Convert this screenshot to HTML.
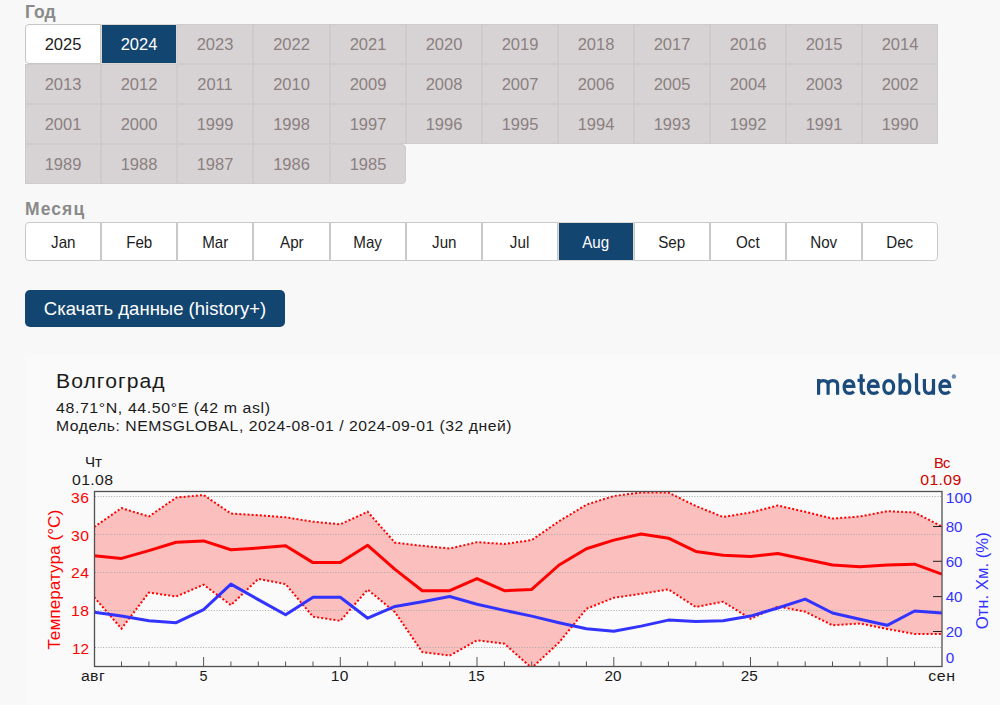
<!DOCTYPE html>
<html><head><meta charset="utf-8">
<style>
html,body{margin:0;padding:0;background:#f8f8f8;width:1000px;height:705px;overflow:hidden;position:relative;font-family:"Liberation Sans",sans-serif;}
.lbl{position:absolute;left:25px;font-weight:bold;font-size:17.5px;color:#8a8a8a;line-height:20px;}
.yc,.mc{position:absolute;width:76.1667px;height:40px;box-sizing:border-box;text-align:center;font-size:16.5px;line-height:40px;}
.yc{line-height:38px;background:#d7d3d4;color:#8b7f80;border:1px solid #cdcbcb;}
.yc.w{background:#fff;color:#1c1c22;border-color:#c6c6c6;border-radius:4px 0 0 4px;}
.yc.sel{background:#134571;color:#fff;border-color:#dcd8d4;}
.yc.last{border-radius:0 4px 4px 0;}
.mc{top:222px;height:39px;background:#fff;color:#1c1c22;border:1px solid #c9c9c9;line-height:39px;}
.mc span{display:inline-block;transform:scaleX(0.92);}
.mc.first{border-radius:4px 0 0 4px;}
.mc.lastm{border-radius:0 4px 4px 0;}
.mc.sel{background:#134571;color:#fff;border-color:#dcd8d4;}
.btn{position:absolute;left:25px;top:290px;width:260px;height:37px;background:#134571;border-radius:5px;color:#fff;font-size:18.5px;line-height:37px;text-align:center;}
.panel{position:absolute;left:25px;top:355px;width:975px;height:350px;background:#fafafa;}
svg{position:absolute;left:0;top:0;}
.gl{stroke:#a8a8a8;stroke-width:1;stroke-dasharray:1 1.7;}
.tk{stroke:#555;stroke-width:1;}
.tk2{stroke:#222;stroke-width:1;}
</style></head><body>
<div class="lbl" style="top:2px">Год</div>
<div class="yc w" style="left:25px;width:76px;top:24px">2025</div>
<div class="yc sel" style="left:101px;width:76px;top:24px">2024</div>
<div class="yc" style="left:177px;width:76px;top:24px">2023</div>
<div class="yc" style="left:253px;width:77px;top:24px">2022</div>
<div class="yc" style="left:330px;width:76px;top:24px">2021</div>
<div class="yc" style="left:406px;width:76px;top:24px">2020</div>
<div class="yc" style="left:482px;width:76px;top:24px">2019</div>
<div class="yc" style="left:558px;width:76px;top:24px">2018</div>
<div class="yc" style="left:634px;width:76px;top:24px">2017</div>
<div class="yc" style="left:710px;width:76px;top:24px">2016</div>
<div class="yc" style="left:786px;width:76px;top:24px">2015</div>
<div class="yc" style="left:862px;width:76px;top:24px">2014</div>
<div class="yc" style="left:25px;width:76px;top:64px">2013</div>
<div class="yc" style="left:101px;width:76px;top:64px">2012</div>
<div class="yc" style="left:177px;width:76px;top:64px">2011</div>
<div class="yc" style="left:253px;width:77px;top:64px">2010</div>
<div class="yc" style="left:330px;width:76px;top:64px">2009</div>
<div class="yc" style="left:406px;width:76px;top:64px">2008</div>
<div class="yc" style="left:482px;width:76px;top:64px">2007</div>
<div class="yc" style="left:558px;width:76px;top:64px">2006</div>
<div class="yc" style="left:634px;width:76px;top:64px">2005</div>
<div class="yc" style="left:710px;width:76px;top:64px">2004</div>
<div class="yc" style="left:786px;width:76px;top:64px">2003</div>
<div class="yc" style="left:862px;width:76px;top:64px">2002</div>
<div class="yc" style="left:25px;width:76px;top:104px">2001</div>
<div class="yc" style="left:101px;width:76px;top:104px">2000</div>
<div class="yc" style="left:177px;width:76px;top:104px">1999</div>
<div class="yc" style="left:253px;width:77px;top:104px">1998</div>
<div class="yc" style="left:330px;width:76px;top:104px">1997</div>
<div class="yc" style="left:406px;width:76px;top:104px">1996</div>
<div class="yc" style="left:482px;width:76px;top:104px">1995</div>
<div class="yc" style="left:558px;width:76px;top:104px">1994</div>
<div class="yc" style="left:634px;width:76px;top:104px">1993</div>
<div class="yc" style="left:710px;width:76px;top:104px">1992</div>
<div class="yc" style="left:786px;width:76px;top:104px">1991</div>
<div class="yc" style="left:862px;width:76px;top:104px">1990</div>
<div class="yc" style="left:25px;width:76px;top:144px">1989</div>
<div class="yc" style="left:101px;width:76px;top:144px">1988</div>
<div class="yc" style="left:177px;width:76px;top:144px">1987</div>
<div class="yc" style="left:253px;width:77px;top:144px">1986</div>
<div class="yc last" style="left:330px;width:76px;top:144px">1985</div>
<div class="lbl" style="top:199px;letter-spacing:1.1px">Месяц</div>
<div class="mc first" style="left:25px;width:76px"><span>Jan</span></div>
<div class="mc" style="left:101px;width:76px"><span>Feb</span></div>
<div class="mc" style="left:177px;width:76px"><span>Mar</span></div>
<div class="mc" style="left:253px;width:77px"><span>Apr</span></div>
<div class="mc" style="left:330px;width:76px"><span>May</span></div>
<div class="mc" style="left:406px;width:76px"><span>Jun</span></div>
<div class="mc" style="left:482px;width:76px"><span>Jul</span></div>
<div class="mc sel" style="left:558px;width:76px"><span>Aug</span></div>
<div class="mc" style="left:634px;width:76px"><span>Sep</span></div>
<div class="mc" style="left:710px;width:76px"><span>Oct</span></div>
<div class="mc" style="left:786px;width:76px"><span>Nov</span></div>
<div class="mc lastm" style="left:862px;width:76px"><span>Dec</span></div>
<div class="btn">Скачать данные (history+)</div>
<div class="panel"></div>
<svg width="1000" height="705" viewBox="0 0 1000 705" font-family="Liberation Sans, sans-serif">
<defs><clipPath id="pc"><rect x="94.5" y="492" width="847.5" height="174"/></clipPath></defs>
<g clip-path="url(#pc)">
<polygon points="94.2,527.0 121.5,508.1 148.9,516.5 176.2,497.6 203.6,495.0 230.9,513.5 258.3,515.2 285.6,517.3 313.0,521.7 340.3,524.3 367.7,511.8 395.0,542.7 422.3,545.8 449.7,548.5 477.0,542.2 504.4,544.0 531.7,540.1 559.1,521.2 586.4,504.7 613.8,496.0 641.1,492.6 668.4,492.6 695.8,506.0 723.1,517.0 750.5,512.5 777.8,505.5 805.2,511.8 832.5,518.6 859.9,516.5 887.2,511.2 914.6,512.5 941.9,526.5 941.9,634.1 914.6,634.0 887.2,629.0 859.9,623.5 832.5,625.3 805.2,611.7 777.8,606.5 750.5,618.8 723.1,601.7 695.8,607.0 668.4,589.4 641.1,593.8 613.8,597.8 586.4,608.8 559.1,642.4 531.7,668.0 504.4,643.7 477.0,640.3 449.7,655.5 422.3,652.1 395.0,612.2 367.7,589.6 340.3,620.8 313.0,616.7 285.6,584.1 258.3,578.9 230.9,605.1 203.6,584.7 176.2,596.5 148.9,592.5 121.5,628.7 94.2,597.2" fill="#fbbfbe"/>
<line x1="95" y1="496.5" x2="941" y2="496.5" class="gl"/><line x1="95" y1="534.5" x2="941" y2="534.5" class="gl"/><line x1="95" y1="572.5" x2="941" y2="572.5" class="gl"/><line x1="95" y1="610.5" x2="941" y2="610.5" class="gl"/><line x1="95" y1="647.5" x2="941" y2="647.5" class="gl"/>
<polyline points="94.2,527.0 121.5,508.1 148.9,516.5 176.2,497.6 203.6,495.0 230.9,513.5 258.3,515.2 285.6,517.3 313.0,521.7 340.3,524.3 367.7,511.8 395.0,542.7 422.3,545.8 449.7,548.5 477.0,542.2 504.4,544.0 531.7,540.1 559.1,521.2 586.4,504.7 613.8,496.0 641.1,492.6 668.4,492.6 695.8,506.0 723.1,517.0 750.5,512.5 777.8,505.5 805.2,511.8 832.5,518.6 859.9,516.5 887.2,511.2 914.6,512.5 941.9,526.5" fill="none" stroke="#ff0000" stroke-width="2" stroke-dasharray="2 2.1"/>
<polyline points="94.2,597.2 121.5,628.7 148.9,592.5 176.2,596.5 203.6,584.7 230.9,605.1 258.3,578.9 285.6,584.1 313.0,616.7 340.3,620.8 367.7,589.6 395.0,612.2 422.3,652.1 449.7,655.5 477.0,640.3 504.4,643.7 531.7,668.0 559.1,642.4 586.4,608.8 613.8,597.8 641.1,593.8 668.4,589.4 695.8,607.0 723.1,601.7 750.5,618.8 777.8,606.5 805.2,611.7 832.5,625.3 859.9,623.5 887.2,629.0 914.6,634.0 941.9,634.1" fill="none" stroke="#ff0000" stroke-width="2" stroke-dasharray="2 2.1"/>
<polyline points="94.2,555.8 121.5,558.4 148.9,550.6 176.2,542.2 203.6,540.9 230.9,549.8 258.3,548.0 285.6,545.8 313.0,562.6 340.3,562.4 367.7,545.3 395.0,569.4 422.3,590.7 449.7,590.7 477.0,578.6 504.4,590.7 531.7,589.4 559.1,565.0 586.4,548.7 613.8,540.1 641.1,534.0 668.4,538.2 695.8,551.4 723.1,555.3 750.5,556.6 777.8,553.5 805.2,559.2 832.5,565.0 859.9,566.8 887.2,565.0 914.6,564.2 941.9,574.2" fill="none" stroke="#ff0000" stroke-width="3" stroke-linejoin="round"/>
<polyline points="94.2,612.2 121.5,616.1 148.9,620.8 176.2,622.7 203.6,609.6 230.9,584.1 258.3,599.6 285.6,614.8 313.0,597.2 340.3,597.2 367.7,618.2 395.0,606.4 422.3,601.7 449.7,596.5 477.0,604.3 504.4,610.4 531.7,616.1 559.1,622.7 586.4,628.7 613.8,631.3 641.1,626.1 668.4,620.1 695.8,621.4 723.1,620.8 750.5,616.1 777.8,608.0 805.2,599.1 832.5,613.0 859.9,619.3 887.2,625.3 914.6,611.0 941.9,613.1" fill="none" stroke="#3333ff" stroke-width="3" stroke-linejoin="round"/>
</g>
<line x1="121.5" y1="666" x2="121.5" y2="661.5" class="tk"/><line x1="148.9" y1="666" x2="148.9" y2="661.5" class="tk"/><line x1="176.2" y1="666" x2="176.2" y2="661.5" class="tk"/><line x1="203.6" y1="666" x2="203.6" y2="657.0" class="tk"/><line x1="230.9" y1="666" x2="230.9" y2="661.5" class="tk"/><line x1="258.3" y1="666" x2="258.3" y2="661.5" class="tk"/><line x1="285.6" y1="666" x2="285.6" y2="661.5" class="tk"/><line x1="313.0" y1="666" x2="313.0" y2="661.5" class="tk"/><line x1="340.3" y1="666" x2="340.3" y2="657.0" class="tk"/><line x1="367.7" y1="666" x2="367.7" y2="661.5" class="tk"/><line x1="395.0" y1="666" x2="395.0" y2="661.5" class="tk"/><line x1="422.3" y1="666" x2="422.3" y2="661.5" class="tk"/><line x1="449.7" y1="666" x2="449.7" y2="661.5" class="tk"/><line x1="477.0" y1="666" x2="477.0" y2="657.0" class="tk"/><line x1="504.4" y1="666" x2="504.4" y2="661.5" class="tk"/><line x1="531.7" y1="666" x2="531.7" y2="661.5" class="tk"/><line x1="559.1" y1="666" x2="559.1" y2="661.5" class="tk"/><line x1="586.4" y1="666" x2="586.4" y2="661.5" class="tk"/><line x1="613.8" y1="666" x2="613.8" y2="657.0" class="tk"/><line x1="641.1" y1="666" x2="641.1" y2="661.5" class="tk"/><line x1="668.4" y1="666" x2="668.4" y2="661.5" class="tk"/><line x1="695.8" y1="666" x2="695.8" y2="661.5" class="tk"/><line x1="723.1" y1="666" x2="723.1" y2="661.5" class="tk"/><line x1="750.5" y1="666" x2="750.5" y2="657.0" class="tk"/><line x1="777.8" y1="666" x2="777.8" y2="661.5" class="tk"/><line x1="805.2" y1="666" x2="805.2" y2="661.5" class="tk"/><line x1="832.5" y1="666" x2="832.5" y2="661.5" class="tk"/><line x1="859.9" y1="666" x2="859.9" y2="661.5" class="tk"/><line x1="887.2" y1="666" x2="887.2" y2="657.0" class="tk"/><line x1="914.6" y1="666" x2="914.6" y2="661.5" class="tk"/><line x1="933" y1="526.5" x2="942" y2="526.5" class="tk2"/><line x1="933" y1="561.3" x2="942" y2="561.3" class="tk2"/><line x1="933" y1="596.6" x2="942" y2="596.6" class="tk2"/><line x1="933" y1="631.5" x2="942" y2="631.5" class="tk2"/>
<rect x="94.5" y="491.5" width="847.5" height="175" fill="none" stroke="#505050" stroke-width="1.3"/>
<text transform="translate(56,387.5) scale(1.0839,1)" font-size="19.5" fill="#1a1a1a" textLength="100.28" lengthAdjust="spacing" >Волгоград</text>
<text transform="translate(56,412.6) scale(1.0768,1)" font-size="14.8" fill="#1a1a1a" textLength="198.74" lengthAdjust="spacing" >48.71°N, 44.50°E (42 m asl)</text>
<text transform="translate(56,430.9) scale(1.0630,1)" font-size="14.8" fill="#1a1a1a" textLength="428.49" lengthAdjust="spacing" >Модель: NEMSGLOBAL, 2024-08-01 / 2024-09-01 (32 дней)</text>
<text transform="translate(85,467.0) scale(0.9941,1)" font-size="15.3" fill="#1a1a1a" textLength="17.10" lengthAdjust="spacing" >Чт</text>
<text transform="translate(72,484.5) scale(1.0349,1)" font-size="15.3" fill="#1a1a1a" textLength="39.62" lengthAdjust="spacing" >01.08</text>
<text transform="translate(934,467.7) scale(0.9583,1)" font-size="15.3" fill="#cc0000" textLength="17.11" lengthAdjust="spacing" >Вс</text>
<text transform="translate(920.3,484.7) scale(1.0349,1)" font-size="15.3" fill="#cc0000" textLength="39.62" lengthAdjust="spacing" >01.09</text>
<text transform="translate(71,502.5) scale(1.0285,1)" font-size="15.3" fill="#ff0000" textLength="17.50" lengthAdjust="spacing" >36</text>
<text transform="translate(71,540.5) scale(1.0285,1)" font-size="15.3" fill="#ff0000" textLength="17.50" lengthAdjust="spacing" >30</text>
<text transform="translate(71,578.2) scale(1.0285,1)" font-size="15.3" fill="#ff0000" textLength="17.50" lengthAdjust="spacing" >24</text>
<text transform="translate(71,615.9) scale(1.0285,1)" font-size="15.3" fill="#ff0000" textLength="17.50" lengthAdjust="spacing" >18</text>
<text transform="translate(71.9,654.4) scale(0.9995,1)" font-size="15.3" fill="#ff0000" textLength="17.01" lengthAdjust="spacing" >12</text>
<text transform="translate(945.7,503.2) scale(1.0149,1)" font-size="15.3" fill="#3333ff" textLength="25.91" lengthAdjust="spacing" >100</text>
<text transform="translate(945.7,531.7) scale(0.9907,1)" font-size="15.3" fill="#3333ff" textLength="16.86" lengthAdjust="spacing" >80</text>
<text transform="translate(945.7,566.7) scale(0.9907,1)" font-size="15.3" fill="#3333ff" textLength="16.86" lengthAdjust="spacing" >60</text>
<text transform="translate(945.7,601.9) scale(0.9907,1)" font-size="15.3" fill="#3333ff" textLength="16.86" lengthAdjust="spacing" >40</text>
<text transform="translate(945.7,636.8) scale(0.9907,1)" font-size="15.3" fill="#3333ff" textLength="16.86" lengthAdjust="spacing" >20</text>
<text transform="translate(945.7,663.3) scale(0.9991,1)" font-size="15.3" fill="#3333ff" textLength="8.51" lengthAdjust="spacing" >0</text>
<text transform="translate(80.9,681.1) scale(1.0350,1)" font-size="15.3" fill="#1a1a1a" textLength="23.00" lengthAdjust="spacing" >авг</text>
<text transform="translate(199.4,681.3) scale(0.9447,1)" font-size="15.3" fill="#1a1a1a" textLength="8.04" lengthAdjust="spacing" >5</text>
<text transform="translate(330.8,681.3) scale(1.0170,1)" font-size="15.3" fill="#1a1a1a" textLength="17.31" lengthAdjust="spacing" >10</text>
<text transform="translate(468,681.3) scale(0.9907,1)" font-size="15.3" fill="#1a1a1a" textLength="16.86" lengthAdjust="spacing" >15</text>
<text transform="translate(604.4,681.3) scale(0.9995,1)" font-size="15.3" fill="#1a1a1a" textLength="17.01" lengthAdjust="spacing" >20</text>
<text transform="translate(740.8,681.3) scale(0.9995,1)" font-size="15.3" fill="#1a1a1a" textLength="17.01" lengthAdjust="spacing" >25</text>
<text transform="translate(928.3,681.1) scale(1.0416,1)" font-size="15.3" fill="#1a1a1a" textLength="25.63" lengthAdjust="spacing" >сен</text>
<text transform="translate(60.2,649.7) rotate(-90)" font-size="17" fill="#ff0000" textLength="140" lengthAdjust="spacingAndGlyphs">Температура (°C)</text>
<text transform="translate(987.8,629.3) rotate(-90)" font-size="17.2" fill="#3333ff" textLength="97" lengthAdjust="spacingAndGlyphs">Отн. Хм. (%)</text>
<path d="M818.6,394.7 V379 M818.6,385 C818.6,382 820.5,380.6 823.3,380.6 C826.1,380.6 828.1,382 828.1,385 V394.7 M828.1,385 C828.1,382 830,380.6 832.8,380.6 C835.6,380.6 837.6,382 837.6,385 V394.7 M844.10,386.4 H853.90 C853.90,382.7 851.80,380.6 849.00,380.6 C846.20,380.6 844.10,383 844.10,387 C844.10,391 846.20,393.4 849.30,393.4 C851.00,393.4 852.50,392.9 853.90,391.6 M861.2,374.3 V389.5 C861.2,392.3 862.3,393.4 864.2,393.4 H865.3 M857.5,380.3 H864.8 M868.35,386.4 H878.15 C878.15,382.7 876.05,380.6 873.25,380.6 C870.45,380.6 868.35,383 868.35,387 C868.35,391 870.45,393.4 873.55,393.4 C875.25,393.4 876.75,392.9 878.15,391.6 M888.75,380.6 C891.6,380.6 893.65,383 893.65,387 C893.65,391 891.6,393.4 888.75,393.4 C885.9,393.4 883.85,391 883.85,387 C883.85,383 885.9,380.6 888.75,380.6 Z M900.1,373.3 V394.7 M900.1,387 C900.1,383 902,380.6 904.9,380.6 C907.8,380.6 909.7,383 909.7,387 C909.7,391 907.8,393.4 904.9,393.4 C902,393.4 900.1,391 900.1,387 M916.5,373.3 V389.5 C916.5,392.3 917.6,393.4 919.5,393.4 H920.3 M924.4,379 V387.5 C924.4,391.4 926.2,393.4 928.9,393.4 C931.6,393.4 933.5,391.4 933.5,387.5 M933.5,379 V394.7 M939.90,386.4 H949.70 C949.70,382.7 947.60,380.6 944.80,380.6 C942.00,380.6 939.90,383 939.90,387 C939.90,391 942.00,393.4 945.10,393.4 C946.80,393.4 948.30,392.9 949.70,391.6" fill="none" stroke="#1b4b7b" stroke-width="3.2"/>
<circle cx="953.9" cy="376.5" r="2.2" fill="#6f8db3"/>
</svg>
</body></html>
